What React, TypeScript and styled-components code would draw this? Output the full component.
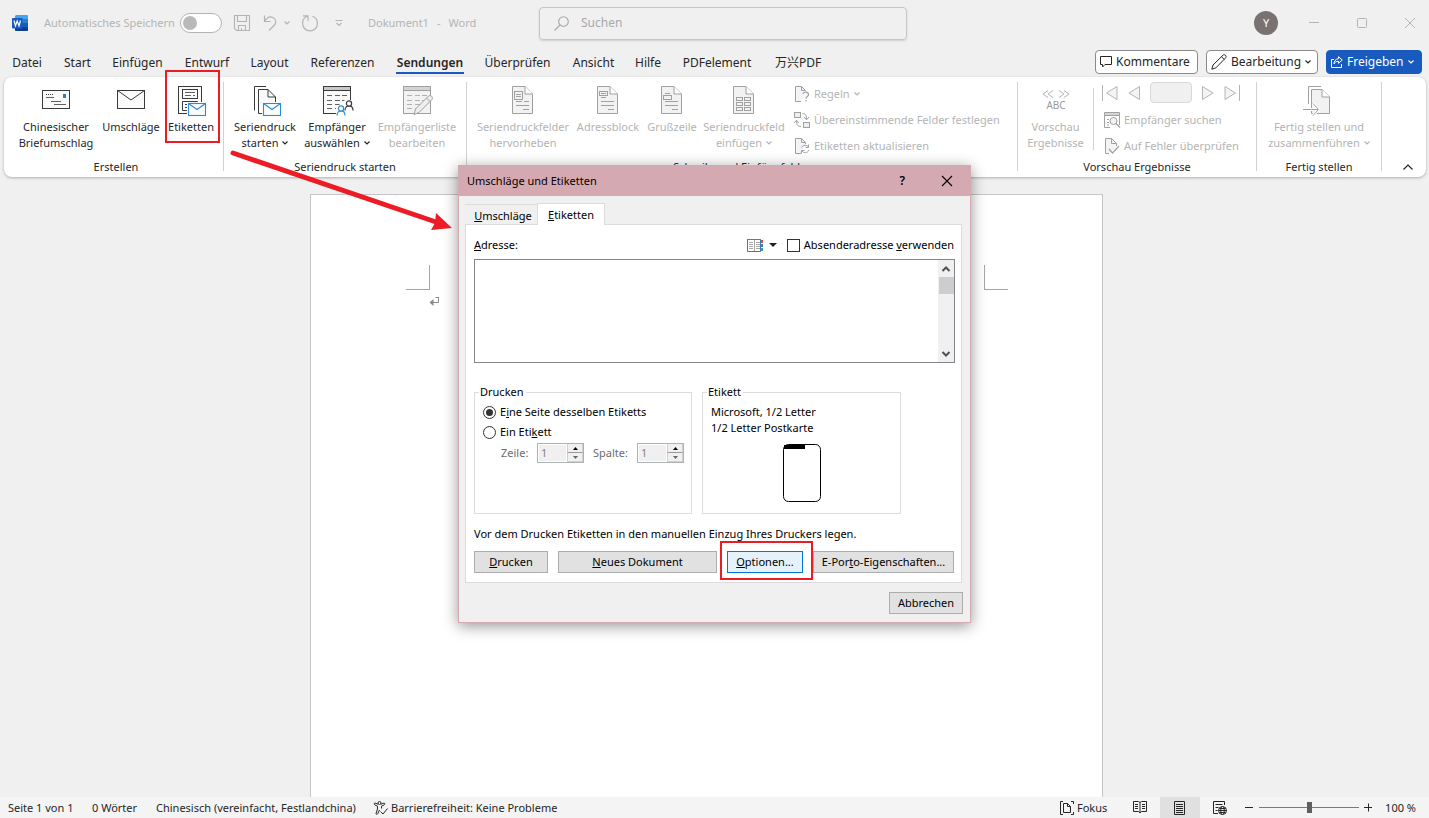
import React from "react";
import styled, { createGlobalStyle, css } from "styled-components";

const INK = "#262626";
const MUTED = "#b4b4b4";
const RED = "#ed1c24";
const BLUE = "#185abd";

const Global = createGlobalStyle`
  * { box-sizing: border-box; }
  body {
    margin: 0;
    background: #f0f0f0;
    color: ${INK};
    font-family: "Noto Sans", "Noto Sans CJK SC", sans-serif;
    font-size: 11px;
    line-height: 16px;
  }
  button, input, textarea { font: inherit; color: inherit; margin: 0; }
  button { background: none; border: 0; padding: 0; white-space: nowrap; }
  svg { display: block; flex: none; overflow: visible; fill: none; }
`;

const Shell = styled.div`
  position: relative;
  display: flex;
  flex-direction: column;
  height: 100vh;
  overflow: hidden;
`;

/* ---------- title bar ---------- */

const TitleBar = styled.header`
  display: flex;
  align-items: center;
  height: 46px;
  color: ${MUTED};
`;

const TitleLeft = styled.div`
  flex: 1 1 31px;
  min-width: 0;
  display: flex;
  align-items: center;
  padding-left: 12px;
  white-space: nowrap;
`;

const AutoSave = styled.label`
  display: flex;
  align-items: center;
  justify-content: space-between;
  width: 178px;
  margin-left: 16px;
`;

const Switch = styled.input`
  appearance: none;
  width: 42px;
  height: 20px;
  border: 1px solid #b4b4b4;
  border-radius: 10px;
  background: #fff;
  padding: 2px;
  &::before {
    content: "";
    display: block;
    width: 14px;
    height: 14px;
    border-radius: 50%;
    background: #b9b9b9;
  }
`;

const QuickTools = styled.div`
  display: flex;
  align-items: center;
  gap: 12px;
  margin: 0 24px 0 12px;
  > :last-child { margin-left: 4px; }
`;

const SplitTool = styled.div`
  display: flex;
  align-items: center;
  gap: 6px;
`;

const DocName = styled.div`
  display: flex;
  gap: 8px;
`;

const SearchBox = styled.label`
  flex: 0 1 368px;
  height: 33px;
  display: flex;
  align-items: center;
  gap: 12px;
  padding-left: 14px;
  border: 1px solid #c6c6c6;
  border-radius: 4px;
  box-shadow: 0 1px 2px rgba(0, 0, 0, 0.14);
`;

const SearchInput = styled.input`
  flex: 1;
  min-width: 0;
  border: 0;
  outline: 0;
  background: none;
  padding: 0;
  font-size: 12px;
  &::placeholder { color: #a8a8a8; opacity: 1; }
`;

const TitleRight = styled.div`
  flex: 1 1 0;
  display: flex;
  align-items: center;
  justify-content: flex-end;
  gap: 38px;
  padding-right: 14px;
`;

const Avatar = styled.button`
  width: 24px;
  height: 24px;
  margin-right: -7px;
  border-radius: 50%;
  background: #7a7272;
  color: #fff;
  text-align: center;
`;

/* ---------- tab row ---------- */

const TabRow = styled.nav`
  display: flex;
  align-items: center;
  height: 31px;
  padding: 0 7px 0 1px;
  font-size: 12px;
`;

const RibbonTab = styled.button<{ $w: number; $active?: boolean }>`
  display: flex;
  justify-content: center;
  align-self: flex-end;
  width: ${(p) => p.$w}px;
  margin-bottom: 3px;
  ${(p) =>
    p.$active &&
    css`
      font-weight: 600;
    `}
  span {
    padding: 0 1px 1px;
    border-bottom: 2px solid ${(p) => (p.$active ? BLUE : "transparent")};
  }
`;

const Actions = styled.div`
  display: flex;
  gap: 8px;
  margin-left: auto;
`;

const ActionButton = styled.button<{ $w: number; $primary?: boolean }>`
  display: flex;
  align-items: center;
  gap: 4px;
  width: ${(p) => p.$w}px;
  height: 24px;
  padding: 0 4px;
  border: 1px solid ${(p) => (p.$primary ? BLUE : "#8a8a8a")};
  border-radius: 4px;
  background: ${(p) => (p.$primary ? BLUE : "#fff")};
  color: ${(p) => (p.$primary ? "#fff" : INK)};
`;

/* ---------- ribbon ---------- */

const Ribbon = styled.section`
  display: flex;
  height: 100px;
  margin: 0 3px 0 4px;
  border-radius: 8px;
  background: #fff;
  box-shadow: 0 1px 3px rgba(0, 0, 0, 0.28);
`;

const Group = styled.div<{ $w: number; $pad?: string }>`
  display: flex;
  flex-direction: column;
  justify-content: space-between;
  width: ${(p) => p.$w}px;
  padding: ${(p) => p.$pad ?? "4px 4px 2px"};
`;

const GroupRow = styled.div`
  display: flex;
`;

const GroupName = styled.div`
  text-align: center;
`;

const Divider = styled.div`
  width: 1px;
  margin: 5px 0 6px;
  background: #d2d2d2;
`;

const InnerDivider = styled.div`
  width: 1px;
  height: 62px;
  margin: 7px 8px 0 0;
  background: #d2d2d2;
`;

const BigButton = styled.button<{ $w: number; $off?: boolean }>`
  position: relative;
  display: flex;
  flex-direction: column;
  align-items: center;
  width: ${(p) => p.$w}px;
  padding-top: 5px;
  color: ${(p) => (p.$off ? MUTED : INK)};
  svg.art { margin-bottom: 3px; }
`;

const LabelLine = styled.span`
  display: flex;
  align-items: center;
  gap: 4px;
  height: 16px;
`;

const SmallColumn = styled.div<{ $indent?: boolean }>`
  display: flex;
  flex-direction: column;
  margin-left: ${(p) => (p.$indent ? 9 : 0)}px;
`;

const SmallButton = styled.button`
  display: flex;
  align-items: center;
  gap: 4px;
  height: 26px;
  color: ${MUTED};
`;

const RecordNav = styled.div`
  display: flex;
  align-items: center;
  justify-content: space-between;
  width: 138px;
  height: 26px;
  padding-bottom: 3px;
`;

const RecordBox = styled.input`
  width: 42px;
  height: 21px;
  border: 1px solid #d8d8d8;
  border-radius: 4px;
  background: #f0f0f0;
`;

const Collapse = styled.button`
  align-self: flex-end;
  margin: 0 13px 7px auto;
`;

const Highlight = styled.i<{ $box: string }>`
  position: absolute;
  inset: ${(p) => p.$box};
  border: 2px solid ${RED};
  pointer-events: none;
`;

/* ---------- document ---------- */

const Canvas = styled.main`
  flex: 1;
  min-height: 0;
  display: flex;
  justify-content: center;
  padding: 17px 16px 0 0;
  overflow: hidden;
`;

const Sheet = styled.div`
  width: 793px;
  padding: 70px 94px 0 95px;
  border: 1px solid #c6c6c6;
  border-bottom: 0;
  background: #fff;
`;

const Corners = styled.div`
  display: flex;
  justify-content: space-between;
`;

const Corner = styled.div<{ $side: "left" | "right" }>`
  width: 24px;
  height: 25px;
  border-bottom: 1px solid #a6a6a6;
  ${(p) => (p.$side === "left" ? "border-right" : "border-left")}: 1px solid #a6a6a6;
`;

const Pilcrow = styled.div`
  padding: 7px 0 0 23px;
`;

/* ---------- status bar ---------- */

const StatusBar = styled.footer`
  display: flex;
  align-items: center;
  height: 21px;
  padding: 0 13px 0 8px;
  background: #f4f4f4;
  white-space: nowrap;
`;

const StatusItem = styled.button<{ $w?: number; $end?: boolean }>`
  display: flex;
  align-items: center;
  justify-content: ${(p) => (p.$end ? "flex-end" : "flex-start")};
  gap: 3px;
  ${(p) => p.$w && `width: ${p.$w}px;`}
`;

const StatusRight = styled.div`
  display: flex;
  align-items: center;
  height: 100%;
  margin-left: auto;
`;

const ViewButton = styled.button<{ $on?: boolean }>`
  display: flex;
  align-items: center;
  justify-content: center;
  width: 40px;
  height: 21px;
  background: ${(p) => (p.$on ? "#e0e0e0" : "none")};
`;

const Zoom = styled.input`
  appearance: none;
  width: 100px;
  height: 12px;
  margin: 0 5px;
  background: linear-gradient(#7a7a7a, #7a7a7a) center / 100% 1px no-repeat;
  &::-webkit-slider-thumb {
    appearance: none;
    width: 5px;
    height: 11px;
    background: #5f5f5f;
  }
`;

/* ---------- dialog ---------- */

const DialogLayer = styled.div`
  position: absolute;
  inset: 165px 0 auto;
  display: flex;
  justify-content: center;
`;

const Dialog = styled.section`
  width: 513px;
  border: 1px solid #d5a9b1;
  background: #f0f0f0;
  color: #000;
  box-shadow: 0 3px 14px rgba(0, 0, 0, 0.42);
`;

const DialogTitle = styled.div`
  display: flex;
  align-items: center;
  height: 30px;
  padding: 0 18px 0 8px;
  background: #d5a9b1;
`;

const HelpButton = styled.button`
  margin: 0 37px 0 auto;
  font-size: 12px;
  font-weight: 600;
`;

const DialogBody = styled.div`
  padding: 7px 7px 8px 6px;
`;

const DialogTabs = styled.div`
  display: flex;
  align-items: flex-end;
`;

const DialogTab = styled.button<{ $active?: boolean }>`
  position: relative;
  width: ${(p) => (p.$active ? 68 : 72)}px;
  height: ${(p) => (p.$active ? 22 : 20)}px;
  margin-bottom: ${(p) => (p.$active ? -1 : 0)}px;
  padding: ${(p) => (p.$active ? "1px 0 0" : "2px 0 0 4px")};
  border: 1px solid #dcdcdc;
  border-bottom: 0;
  ${(p) => !p.$active && "border-left: 0; border-right: 0;"}
  background: ${(p) => (p.$active ? "#fff" : "#f0f0f0")};
`;

const Panel = styled.div`
  margin-right: 1px;
  padding: 10px 6px 9px 8px;
  border: 1px solid #dcdcdc;
  background: #fff;
`;

const AddressRow = styled.div`
  display: flex;
  align-items: center;
  height: 20px;
  padding-right: 1px;
`;

const BookButton = styled.button`
  display: flex;
  align-items: center;
  gap: 6px;
  margin: 0 10px 0 auto;
`;

const Check = styled.label`
  display: flex;
  align-items: center;
  gap: 4px;
  input {
    appearance: none;
    width: 13px;
    height: 13px;
    border: 1px solid #333;
    background: #fff;
  }
`;

const AddressBox = styled.div`
  display: flex;
  height: 104px;
  margin: 4px 0 21px;
  border: 1px solid #82868c;
`;

const AddressText = styled.textarea`
  flex: 1;
  border: 0;
  outline: 0;
  resize: none;
  padding: 2px;
`;

const Rail = styled.div`
  display: flex;
  flex-direction: column;
  align-items: center;
  justify-content: space-between;
  width: 16px;
  background: #f0f0f0;
`;

const RailButton = styled.button`
  display: flex;
  align-items: center;
  justify-content: center;
  width: 16px;
  height: 17px;
`;

const Thumb = styled.div`
  width: 15px;
  height: 17px;
  margin-bottom: auto;
  background: #cdcdcd;
`;

const Boxes = styled.div`
  display: flex;
  gap: 10px;
`;

const Box = styled.fieldset<{ $w: number }>`
  width: ${(p) => p.$w}px;
  min-width: 0;
  height: 130px;
  margin: 0;
  padding: 4px 8px 0;
  border: 1px solid #dcdcdc;
  legend {
    margin-left: -4px;
    padding: 0 2px 0 1px;
  }
`;

const Radio = styled.label`
  display: flex;
  align-items: center;
  gap: 4px;
  height: 16px;
  & + & { margin-top: 4px; }
  input {
    appearance: none;
    width: 13px;
    height: 13px;
    border: 1px solid #333;
    border-radius: 50%;
    padding: 2px;
  }
  input:checked::before {
    content: "";
    display: block;
    width: 7px;
    height: 7px;
    border-radius: 50%;
    background: #333;
  }
`;

const SpinRow = styled.div`
  display: flex;
  align-items: center;
  padding: 3px 0 0 18px;
  color: #6d6d6d;
`;

const SpinLabel = styled.label<{ $w: number }>`
  flex: none;
  width: ${(p) => p.$w}px;
`;

const Spin = styled.div`
  display: flex;
  flex: none;
  width: 47px;
  height: 20px;
  border: 1px solid #adb2b5;
  background: #f0f0f0;
  & + label { margin-left: 9px; }
  input {
    flex: 1;
    min-width: 0;
    border: 1px solid #fff;
    padding: 0 2px;
    background: #f0f0f0;
    color: #8a7f8a;
  }
`;

const SpinButtons = styled.div`
  display: flex;
  flex-direction: column;
  width: 16px;
  button {
    display: flex;
    align-items: center;
    justify-content: center;
    flex: 1;
    border: 1px solid #d0d0d0;
    border-width: 0 1px 1px 1px;
  }
  button:first-child { border-bottom-color: #9a9a9a; }
`;

const LabelPreview = styled.div`
  display: flex;
  justify-content: center;
  padding-top: 8px;
`;

const Note = styled.p`
  margin: 12px 0 9px;
`;

const Buttons = styled.div`
  display: flex;
  gap: 10px;
`;

const PushButton = styled.button<{ $w: number; $hot?: boolean }>`
  position: relative;
  flex: none;
  width: ${(p) => p.$w}px;
  height: 22px;
  border: 1px solid ${(p) => (p.$hot ? "#0078d7" : "#adadad")};
  background: ${(p) => (p.$hot ? "#e5f1fb" : "#e1e1e1")};
  z-index: ${(p) => (p.$hot ? 1 : 0)};
`;

const Footer = styled.div`
  display: flex;
  justify-content: flex-end;
  padding-top: 9px;
`;

const ArrowLayer = styled.svg`
  position: absolute;
  left: 228px;
  top: 148px;
  pointer-events: none;
`;

/* ---------- drawings ---------- */

const Chevron = ({ c = INK, w = 6 }: { c?: string; w?: number }) => (
  <svg width={w} height="4" viewBox="0 0 6 4" stroke={c} strokeWidth="1.2">
    <path d="M.5 .5 3 3 5.5 .5" />
  </svg>
);

const Art = ({ w = 28, c = "#3a3a3a", children }: { w?: number; c?: string; children: React.ReactNode }) => (
  <svg className="art" width={w} height="30" viewBox={`0 0 ${w} 30`} stroke={c} strokeWidth="1">
    {children}
  </svg>
);

const MiniEnvelope = ({ x, y }: { x: number; y: number }) => (
  <g transform={`translate(${x} ${y})`} stroke="#2a8dd4" strokeWidth="1.1">
    <rect x="-1" y="-1" width="20" height="15" fill="#fff" stroke="none" />
    <rect x=".5" y=".5" width="17" height="12" fill="#fafafa" />
    <path d="M.5 .5 9 6.5 17.5 .5" />
  </g>
);

const G = "#a0a0a0";

const FieldDoc = ({ children }: { children: React.ReactNode }) => (
  <Art w={22} c={G}>
    <path d="M.5 .5H13L20.500 8V27.500H.5Z" fill="#f2f2f2" />
    <path d="M13 .5V8H20.500" fill="#fff" />
    {children}
  </Art>
);

const SmallDoc = ({ children }: { children: React.ReactNode }) => (
  <svg width="16" height="16" viewBox="0 0 16 16" stroke={G}>
    <path d="M7 15.500H1.500V.5H7.500L11.500 4.500V6" fill="#f4f4f4" />
    <path d="M7.500 .5V4.500H11.500" />
    {children}
  </svg>
);

const WordLogo = () => (
  <svg width="16" height="16" viewBox="0 0 16 16">
    <path d="M4 0H15.500L16 .5V4H3V1Z" fill="#41a5ee" />
    <path d="M3 4H16V8H3Z" fill="#2b7cd3" />
    <path d="M3 8H16V12H3Z" fill="#185abd" />
    <path d="M3 12H16V15.500L15.500 16H3.500L3 15.500Z" fill="#103f91" />
    <rect y="3" width="10.500" height="10.500" rx="1" fill="#185abd" />
    <path d="M2 5.500 3.500 10.800 5.200 6 7 10.800 8.500 5.500" stroke="#fff" strokeWidth="1.200" />
  </svg>
);

const Person = ({ x, y, c }: { x: number; y: number; c: string }) => (
  <g transform={`translate(${x} ${y})`} stroke={c} strokeWidth="1.2">
    <path d="M0 9.500C0 6 2 4.800 4 4.800S8 6 8 9.500" fill="#fff" />
    <circle cx="4" cy="2.500" r="2.600" fill="#fff" />
  </g>
);

const TableArt = ({ c, head }: { c: string; head: string }) => (
  <>
    <rect x=".5" y=".5" width="27" height="27" fill={c === G ? "#f2f2f2" : "#fafafa"} stroke={c} />
    <rect x=".5" y=".5" width="27" height="4" fill={head} stroke={c} />
    <path
      d="M4 9.500H9M12 9.500H17M19 9.500H24M4 14.500H9M12 14.500H17M19 14.500H24M4 18.500H9M12 18.500H17M4 22.500H9M12 22.500H15"
      stroke={c}
      strokeOpacity=".8"
    />
  </>
);

const U = ({ children }: { children: string }) => <u>{children}</u>;

const TABS: [string, number][] = [
  ["Datei", 52],
  ["Start", 49],
  ["Einfügen", 71],
  ["Entwurf", 68],
  ["Layout", 57],
  ["Referenzen", 89],
  ["Sendungen", 86],
  ["Überprüfen", 89],
  ["Ansicht", 63],
  ["Hilfe", 46],
  ["PDFelement", 92],
  ["万兴PDF", 70],
];

const SpinField = ({ id, label, w }: { id: string; label: string; w: number }) => (
  <>
    <SpinLabel htmlFor={id} $w={w}>{label}</SpinLabel>
    <Spin>
      <input id={id} defaultValue="1" disabled />
      <SpinButtons>
        <button aria-label={`${label} erhöhen`}>
          <svg width="5" height="3" viewBox="0 0 5 3"><path d="M0 3 2.500 0 5 3Z" fill="#000" /></svg>
        </button>
        <button aria-label={`${label} verringern`}>
          <svg width="5" height="3" viewBox="0 0 5 3"><path d="M0 0 2.500 3 5 0Z" fill="#666" /></svg>
        </button>
      </SpinButtons>
    </Spin>
  </>
);

export default function App() {
  return (
    <Shell>
      <Global />
      <TitleBar>
        <TitleLeft>
          <WordLogo />
          <AutoSave>
            Automatisches Speichern
            <Switch type="checkbox" />
          </AutoSave>
          <QuickTools>
            <button aria-label="Speichern">
              <svg width="16" height="16" viewBox="0 0 16 16" stroke={MUTED} strokeWidth="1.1">
                <path d="M.5 .5H15.500V15.500H2.500L.5 13.500ZM3.500 .5V6.500H12.500V.5M4.500 15.500V10.500H11.500V15.500M7.500 13V15.500" />
              </svg>
            </button>
            <SplitTool>
              <button aria-label="Rückgängig">
                <svg width="16" height="16" viewBox="0 0 16 16" stroke={MUTED} strokeWidth="1.2">
                  <path d="M2.500 .5V6.500H8.500M2.500 6.500C5 2.500 8 1 11 2.500C14.500 4.500 14.500 8 12 10.500L7 15.500" />
                </svg>
              </button>
              <Chevron c={MUTED} />
            </SplitTool>
            <button aria-label="Wiederholen">
              <svg width="16" height="16" viewBox="0 0 16 16" stroke={MUTED} strokeWidth="1.2">
                <path d="M1 .8H6V5.800M6 .8C2 2.500 .3 5 .6 8.500A7.400 7.400 0 0 0 15.400 8.500C15.500 5 13.500 2.300 10.500 1.200" />
              </svg>
            </button>
            <button aria-label="Symbolleiste anpassen">
              <svg width="10" height="6" viewBox="0 0 10 6" stroke={MUTED} strokeWidth="1.1">
                <path d="M1.500 .5H8.500M2.500 3 5 5.500 7.500 3" />
              </svg>
            </button>
          </QuickTools>
          <DocName>
            <span>Dokument1</span>
            <span>-</span>
            <span>Word</span>
          </DocName>
        </TitleLeft>
        <SearchBox>
          <svg width="15" height="15" viewBox="0 0 15 15" stroke="#a8a8a8" strokeWidth="1.1">
            <circle cx="9.500" cy="5.500" r="4.800" />
            <path d="M6 9 .5 14.500" />
          </svg>
          <SearchInput placeholder="Suchen" aria-label="Suchen" />
        </SearchBox>
        <TitleRight>
          <Avatar>Y</Avatar>
          <button aria-label="Minimieren">
            <svg width="10" height="10" viewBox="0 0 10 10" stroke={MUTED}><path d="M0 4.500H10" /></svg>
          </button>
          <button aria-label="Maximieren">
            <svg width="10" height="10" viewBox="0 0 10 10" stroke={MUTED}><rect x=".5" y=".5" width="9" height="9" rx="1" /></svg>
          </button>
          <button aria-label="Schließen">
            <svg width="10" height="10" viewBox="0 0 10 10" stroke={MUTED}><path d="M0 0 10 10M10 0 0 10" /></svg>
          </button>
        </TitleRight>
      </TitleBar>

      <TabRow>
        {TABS.map(([name, w]) => (
          <RibbonTab key={name} $w={w} $active={name === "Sendungen"}>
            <span>{name}</span>
          </RibbonTab>
        ))}
        <Actions>
          <ActionButton $w={103}>
            <svg width="12" height="12" viewBox="0 0 12 12" stroke={INK}>
              <path d="M.5 .5H11.500V8.500H5L2.500 11V8.500H.5Z" />
            </svg>
            Kommentare
          </ActionButton>
          <ActionButton $w={112}>
            <svg width="16" height="16" viewBox="0 0 16 16" stroke={INK}>
              <path d="M.8 15.200 2 11 12 1.200C13.500 -.2 16 2 14.700 3.800L4.800 13.900ZM10.500 2.700 13.300 5.500" />
            </svg>
            Bearbeitung
            <Chevron />
          </ActionButton>
          <ActionButton $w={96} $primary>
            <svg width="12" height="12" viewBox="0 0 12 12" stroke="#fff">
              <path d="M3 3.500H.5V11.500H10.500V8M7.500 .7 11.300 4 7.500 7.300V5.300C5 5.300 3.800 6.300 3 8C3 5 4.500 2.900 7.500 2.700Z" />
            </svg>
            Freigeben
            <Chevron c="#fff" />
          </ActionButton>
        </Actions>
      </TabRow>

      <Ribbon>
        <Group $w={219} $pad="4px 5px 2px 10px">
          <GroupRow>
            <BigButton $w={84}>
              <Art>
                <rect x=".5" y="4.500" width="27" height="18" fill="#fafafa" />
                <path d="M4 8.500H11" strokeDasharray="1 1" />
                <path d="M4 11.500H12M9 15.500H19M12 18.500H24" strokeOpacity=".8" />
                <rect x="21" y="8" width="3" height="4" fill="#1e7fd0" stroke="none" />
              </Art>
              <LabelLine>Chinesischer</LabelLine>
              <LabelLine>Briefumschlag</LabelLine>
            </BigButton>
            <BigButton $w={66}>
              <Art>
                <rect x=".5" y="4.500" width="27" height="18" fill="#fafafa" />
                <path d="M.5 4.500 14 14 27.500 4.500" />
              </Art>
              <LabelLine>Umschläge</LabelLine>
            </BigButton>
            <BigButton $w={54}>
              <Art w={26}>
                <rect x=".5" y=".5" width="23" height="27" fill="#fafafa" />
                <rect x="4.500" y="3.500" width="15" height="9" />
                <path d="M7 6.500H17M7 9.500H13M15 9.500H17" strokeOpacity=".8" />
                <path d="M19.500 16V15.500H4.500V24.500H10M7 18.500H9M7 21.500H9" />
                <MiniEnvelope x={10} y={17} />
              </Art>
              <LabelLine>Etiketten</LabelLine>
              <Highlight $box="-11px -2px 8px 1px" />
            </BigButton>
          </GroupRow>
          <GroupName>Erstellen</GroupName>
        </Group>
        <Divider />
        <Group $w={242}>
          <GroupRow>
            <BigButton $w={74}>
              <Art>
                <path d="M3.500 24.500V.5H15" />
                <path d="M7.500 27.500V3.500H17L24.500 11V17M7.500 27.500H13" fill="#fafafa" />
                <path d="M17 3.500V11H24.500" />
                <MiniEnvelope x={12} y={17} />
              </Art>
              <LabelLine>Seriendruck</LabelLine>
              <LabelLine>starten <Chevron /></LabelLine>
            </BigButton>
            <BigButton $w={70}>
              <Art>
                <TableArt c="#3a3a3a" head="#c8c8c8" />
                <path d="M13 30V20L18 18L22 14H30V30Z" fill="#fff" stroke="none" />
                <Person x={22} y={15} c="#3a3a3a" />
                <Person x={14} y={20} c="#2a8dd4" />
              </Art>
              <LabelLine>Empfänger</LabelLine>
              <LabelLine>auswählen <Chevron /></LabelLine>
            </BigButton>
            <BigButton $w={90} $off>
              <Art c={G}>
                <TableArt c={G} head="#d4d4d4" />
                <path d="M11 28.500 12.500 23 25.500 10C27.500 8.500 30.500 11 29 13.500L16 26.500ZM23.500 12 27 15.500" fill="#eee" />
              </Art>
              <LabelLine>Empfängerliste</LabelLine>
              <LabelLine>bearbeiten</LabelLine>
            </BigButton>
          </GroupRow>
          <GroupName>Seriendruck starten</GroupName>
        </Group>
        <Divider />
        <Group $w={550}>
          <GroupRow>
            <BigButton $w={104} $off>
              <FieldDoc>
                <rect x="2.500" y="5.500" width="8" height="8" />
                <path d="M4 8.500H9M4 10.500H9M12 15.500H17M4 15.500H10M4 19.500H17M11 23.500H17" />
              </FieldDoc>
              <LabelLine>Seriendruckfelder</LabelLine>
              <LabelLine>hervorheben</LabelLine>
            </BigButton>
            <BigButton $w={66} $off>
              <FieldDoc>
                <rect x="2.500" y="5.500" width="8" height="4" />
                <path d="M4 7.500H9M4 11.500H9M4 15.500H17M4 19.500H17M11 23.500H17" />
              </FieldDoc>
              <LabelLine>Adressblock</LabelLine>
            </BigButton>
            <BigButton $w={62} $off>
              <FieldDoc>
                <rect x="2.500" y="9.500" width="8" height="4" />
                <path d="M4 7.500H9M4 15.500H17M4 19.500H17M11 23.500H17" />
              </FieldDoc>
              <LabelLine>Grußzeile</LabelLine>
            </BigButton>
            <BigButton $w={82} $off>
              <FieldDoc>
                {[11.5, 16.5, 21.5].map((y) => (
                  <React.Fragment key={y}>
                    <rect x="3.500" y={y} width="6" height="3" />
                    <rect x="11.500" y={y} width="6" height="3" />
                  </React.Fragment>
                ))}
              </FieldDoc>
              <LabelLine>Seriendruckfeld</LabelLine>
              <LabelLine>einfügen <Chevron c={MUTED} /></LabelLine>
            </BigButton>
            <SmallColumn $indent>
              <SmallButton>
                <SmallDoc>
                  <path d="M9 8C9 5.500 14.500 5.500 14.500 8.500C14.500 10.500 12 10.500 12 12.800M12 14V15.500" stroke="#fff" strokeWidth="3" />
                  <path d="M9 8C9 5.500 14.500 5.500 14.500 8.500C14.500 10.500 12 10.500 12 12.800M12 14V15.500" strokeWidth="1.200" />
                </SmallDoc>
                Regeln <Chevron c={MUTED} />
              </SmallButton>
              <SmallButton>
                <svg width="16" height="16" viewBox="0 0 16 16" stroke={G}>
                  <rect x=".5" y=".5" width="6" height="5" fill="#eee" />
                  <rect x="9.500" y="10.500" width="6" height="5" fill="#eee" />
                  <path d="M8.500 1.500C11.500 1.500 12.500 3 12.500 7.500M10 5 12.500 7.800 15 5M7 14.500C4 14.500 2.500 13 2.500 8.500M0 11 2.500 8.300 5 11" />
                </svg>
                Übereinstimmende Felder festlegen
              </SmallButton>
              <SmallButton>
                <SmallDoc>
                  <path d="M7.500 9.500C8.500 7 13 6.500 14.500 9M14.500 6.500V9.500H11.500M15 12C14 15 9.500 15.500 8 13M7.500 15.500V12.500H10.500" />
                </SmallDoc>
                Etiketten aktualisieren
              </SmallButton>
            </SmallColumn>
          </GroupRow>
          <GroupName>Schreib- und Einfügefelder</GroupName>
        </Group>
        <Divider />
        <Group $w={238} $pad="4px 0 2px">
          <GroupRow>
            <BigButton $w={75} $off>
              <Art c={MUTED}>
                <path d="M6 4.500 1 8 6 11.500M11 4.500 6 8 11 11.500M17 4.500 22 8 17 11.500M22 4.500 27 8 22 11.500" />
                <text x="14" y="23" textAnchor="middle" fontSize="10" fill="#9a9a9a" stroke="none">ABC</text>
              </Art>
              <LabelLine>Vorschau</LabelLine>
              <LabelLine>Ergebnisse</LabelLine>
            </BigButton>
            <InnerDivider />
            <SmallColumn>
              <RecordNav>
                <button aria-label="Erster Datensatz">
                  <svg width="16" height="16" viewBox="0 0 16 16" stroke={MUTED}><path d="M.5 0V16M15 1.500V14.500L4.500 8Z" fill="#f4f4f4" /></svg>
                </button>
                <button aria-label="Vorheriger Datensatz">
                  <svg width="12" height="16" viewBox="0 0 12 16" stroke={MUTED}><path d="M11.500 1.500V14.500L1 8Z" fill="#f4f4f4" /></svg>
                </button>
                <RecordBox aria-label="Datensatz" />
                <button aria-label="Nächster Datensatz">
                  <svg width="12" height="16" viewBox="0 0 12 16" stroke={MUTED}><path d="M.5 1.500V14.500L11 8Z" fill="#f4f4f4" /></svg>
                </button>
                <button aria-label="Letzter Datensatz">
                  <svg width="16" height="16" viewBox="0 0 16 16" stroke={MUTED}><path d="M15.500 0V16M1 1.500V14.500L11.500 8Z" fill="#f4f4f4" /></svg>
                </button>
              </RecordNav>
              <SmallButton>
                <svg width="18" height="16" viewBox="-2 0 18 16" stroke={G}>
                  <path d="M.5 .5H15.500V3.500H.5Z" fill="#d4d4d4" />
                  <path d="M6 15.500H.5V3.500H15.500V13" />
                  <path d="M3 7.500H5M3 10.500H5M3 13H5" />
                  <circle cx="9.500" cy="9" r="3.500" fill="#f4f4f4" />
                  <path d="M12 11.500 16 15.500" strokeWidth="1.300" />
                </svg>
                Empfänger suchen
              </SmallButton>
              <SmallButton>
                <svg width="18" height="16" viewBox="-2 0 18 16" stroke={G}>
                  <path d="M5 15.500H1.500V.5H7.500L12.500 5.500V8" fill="#f4f4f4" />
                  <path d="M7.500 .5V5.500H12.500" />
                  <path d="M5 11 8.500 15 15 8" strokeWidth="1.200" />
                </svg>
                Auf Fehler überprüfen
              </SmallButton>
            </SmallColumn>
          </GroupRow>
          <GroupName>Vorschau Ergebnisse</GroupName>
        </Group>
        <Divider />
        <Group $w={124}>
          <GroupRow>
            <BigButton $w={116} $off>
              <Art c={G}>
                <path d="M3.500 18V.5H16" />
                <path d="M6.500 27.500V3.500H17L24.500 11V27.500Z" fill="#f2f2f2" />
                <path d="M17 3.500V11H24.500" fill="#fff" />
                <path d="M-2 23.500H13M8 17.500 13.500 23.500 8 29.500" stroke="#fff" strokeWidth="3" />
                <path d="M-2 23.500H13M8 17.500 13.500 23.500 8 29.500" />
              </Art>
              <LabelLine>Fertig stellen und</LabelLine>
              <LabelLine>zusammenführen <Chevron c={MUTED} /></LabelLine>
            </BigButton>
          </GroupRow>
          <GroupName>Fertig stellen</GroupName>
        </Group>
        <Divider />
        <Collapse aria-label="Menüband reduzieren">
          <svg width="10" height="6" viewBox="0 0 10 6" stroke={INK} strokeWidth="1.200"><path d="M.5 5.500 5 1 9.500 5.500" /></svg>
        </Collapse>
      </Ribbon>

      <Canvas>
        <Sheet>
          <Corners>
            <Corner $side="left" />
            <Corner $side="right" />
          </Corners>
          <Pilcrow>
            <svg width="10" height="9" viewBox="0 0 10 9" stroke="#8a8a8a">
              <path d="M9.500 0V5.500H2M6.500 .5H9.500" />
              <path d="M4.500 2V9L.5 5.500Z" fill="#8a8a8a" stroke="none" />
            </svg>
          </Pilcrow>
        </Sheet>
      </Canvas>

      <StatusBar>
        <StatusItem $w={84}>Seite 1 von 1</StatusItem>
        <StatusItem $w={64}>0 Wörter</StatusItem>
        <StatusItem $w={218}>Chinesisch (vereinfacht, Festlandchina)</StatusItem>
        <StatusItem>
          <svg width="14" height="14" viewBox="0 0 14 14" stroke={INK}>
            <circle cx="5.500" cy="2" r="1.500" />
            <path d="M4 3.200 1 2C0 2 0 3.500 1 4L3.500 5.200V8L2 12.500C2 13.500 3.200 13.700 3.700 12.800L5.500 9M7 3.200 10 2C11 2 11 3.500 10 4L7.500 5.200V7.500M6.500 10.500 9 13 13.500 7.500" />
          </svg>
          Barrierefreiheit: Keine Probleme
        </StatusItem>
        <StatusRight>
          <StatusItem $w={60}>
            <svg width="14" height="14" viewBox="0 0 14 14" stroke={INK}>
              <path d="M3 .5H.5V13.500H3M11 .5H13.500V3M13.500 11V13.500H11M3.500 2.500H7.500L10.500 5.500V11.500H3.500ZM7.500 2.500V5.500H10.500" />
            </svg>
            Fokus
          </StatusItem>
          <ViewButton aria-label="Lesemodus">
            <svg width="14" height="13" viewBox="0 0 14 13" stroke={INK}>
              <path d="M7 1.500V12M.5 .5H5.500L7 1.500 8.500 .5H13.500V10.500H8.500L7 12 5.500 10.500H.5ZM2 3.500H5M2 5.500H5M2 7.500H5M9 3.500H12M9 5.500H12M9 7.500H12" />
            </svg>
          </ViewButton>
          <ViewButton $on aria-label="Seitenlayout">
            <svg width="12" height="14" viewBox="0 0 12 14" stroke={INK}>
              <path d="M.5 .5H10.500V13.500H.5ZM2 3.500H9M2 5.500H9M2 7.500H9M2 9.500H9M2 11.500H9" />
            </svg>
          </ViewButton>
          <ViewButton aria-label="Weblayout">
            <svg width="14" height="14" viewBox="0 0 14 14" stroke={INK}>
              <path d="M5 12.500H.5V.5H11.500V4M2.500 3.500H9.500M2.500 6.500H5.500M2.500 9.500H4.500" />
              <circle cx="9.500" cy="9.500" r="4" fill="#f4f4f4" />
              <ellipse cx="9.500" cy="9.500" rx="1.800" ry="4" />
              <path d="M5.500 9.500H13.500M6.500 7.500H12.500M6.500 11.500H12.500" />
            </svg>
          </ViewButton>
          <button aria-label="Verkleinern">
            <svg width="14" height="9" viewBox="-5 0 14 9" stroke={INK}><path d="M0 4.500H8" /></svg>
          </button>
          <Zoom type="range" aria-label="Zoom" />
          <button aria-label="Vergrößern">
            <svg width="9" height="9" viewBox="0 0 9 9" stroke={INK}><path d="M0 4.500H8M4.500 .5V8.500" /></svg>
          </button>
          <StatusItem $w={43} $end>100 %</StatusItem>
        </StatusRight>
      </StatusBar>

      <DialogLayer>
        <Dialog role="dialog" aria-label="Umschläge und Etiketten">
          <DialogTitle>
            Umschläge und Etiketten
            <HelpButton>?</HelpButton>
            <button aria-label="Schließen">
              <svg width="10" height="10" viewBox="0 0 10 10" stroke="#000" strokeWidth="1.100"><path d="M0 0 10 10M10 0 0 10" /></svg>
            </button>
          </DialogTitle>
          <DialogBody>
            <DialogTabs>
              <DialogTab><U>U</U>mschläge</DialogTab>
              <DialogTab $active><U>E</U>tiketten</DialogTab>
            </DialogTabs>
            <Panel>
              <AddressRow>
                <label htmlFor="address"><U>A</U>dresse:</label>
                <BookButton aria-label="Adressbuch">
                  <svg width="16" height="13" viewBox="0 0 16 13">
                    <path d="M.5 .5H13.500V12.500H.5Z" stroke="#3f79b5" />
                    <path d="M0 .5H14" stroke="#777" />
                    <path d="M7.500 1V12M2 3.500H6M2 5.500H6M2 7.500H6M2 9.500H6M9 3.500H13M9 5.500H13M9 7.500H13M9 9.500H13" stroke="#a6a6a6" />
                    <path d="M14 1H16V4H14Z" fill="#d9502e" />
                    <path d="M14 5H16V8H14Z" fill="#3f79b5" />
                    <path d="M14 9H16V12H14Z" fill="#4f9a7d" />
                  </svg>
                  <svg width="8" height="4" viewBox="0 0 8 4"><path d="M0 0H8L4 4Z" fill="#222" /></svg>
                </BookButton>
                <Check>
                  <input type="checkbox" />
                  <span>Absenderadresse <U>v</U>erwenden</span>
                </Check>
              </AddressRow>
              <AddressBox>
                <AddressText id="address" />
                <Rail>
                  <RailButton aria-label="Nach oben">
                    <svg width="8" height="6" viewBox="0 0 8 6" stroke="#505050" strokeWidth="2"><path d="M.5 5 4 1.500 7.500 5" /></svg>
                  </RailButton>
                  <Thumb />
                  <RailButton aria-label="Nach unten">
                    <svg width="8" height="6" viewBox="0 0 8 6" stroke="#505050" strokeWidth="2"><path d="M.5 1 4 4.500 7.500 1" /></svg>
                  </RailButton>
                </Rail>
              </AddressBox>
              <Boxes>
                <Box $w={218}>
                  <legend>Drucken</legend>
                  <Radio>
                    <input type="radio" name="scope" defaultChecked />
                    <span>E<U>i</U>ne Seite desselben Etiketts</span>
                  </Radio>
                  <Radio>
                    <input type="radio" name="scope" />
                    <span>Ein Eti<U>k</U>ett</span>
                  </Radio>
                  <SpinRow>
                    <SpinField id="row" label="Zeile:" w={36} />
                    <SpinField id="col" label="Spalte:" w={44} />
                  </SpinRow>
                </Box>
                <Box $w={199}>
                  <legend>Etikett</legend>
                  <div>Microsoft, 1/2 Letter</div>
                  <div>1/2 Letter Postkarte</div>
                  <LabelPreview>
                    <svg width="38" height="58" viewBox="0 0 38 58">
                      <rect x=".5" y=".5" width="37" height="57" rx="5" stroke="#000" />
                      <path d="M1 1H22V5H1Z" fill="#000" />
                    </svg>
                  </LabelPreview>
                </Box>
              </Boxes>
              <Note>Vor dem Drucken Etiketten in den manuellen Einzug Ihres Druckers legen.</Note>
              <Buttons>
                <PushButton $w={74}><U>D</U>rucken</PushButton>
                <PushButton $w={159}><U>N</U>eues Dokument</PushButton>
                <PushButton $w={76} $hot>
                  <U>O</U>ptionen...
                  <Highlight $box="-11px -11px -8px -8px" />
                </PushButton>
                <PushButton $w={141}>E-Por<U>t</U>o-Eigenschaften...</PushButton>
              </Buttons>
            </Panel>
            <Footer>
              <PushButton $w={74}>Abbrechen</PushButton>
            </Footer>
          </DialogBody>
        </Dialog>
      </DialogLayer>

      <ArrowLayer width="226" height="84" viewBox="0 0 226 84">
        <path d="M5 5 208 74" stroke={RED} strokeWidth="5" strokeLinecap="round" />
        <path d="M224 80 203 82 207 75 208 65Z" fill={RED} />
      </ArrowLayer>
    </Shell>
  );
}
